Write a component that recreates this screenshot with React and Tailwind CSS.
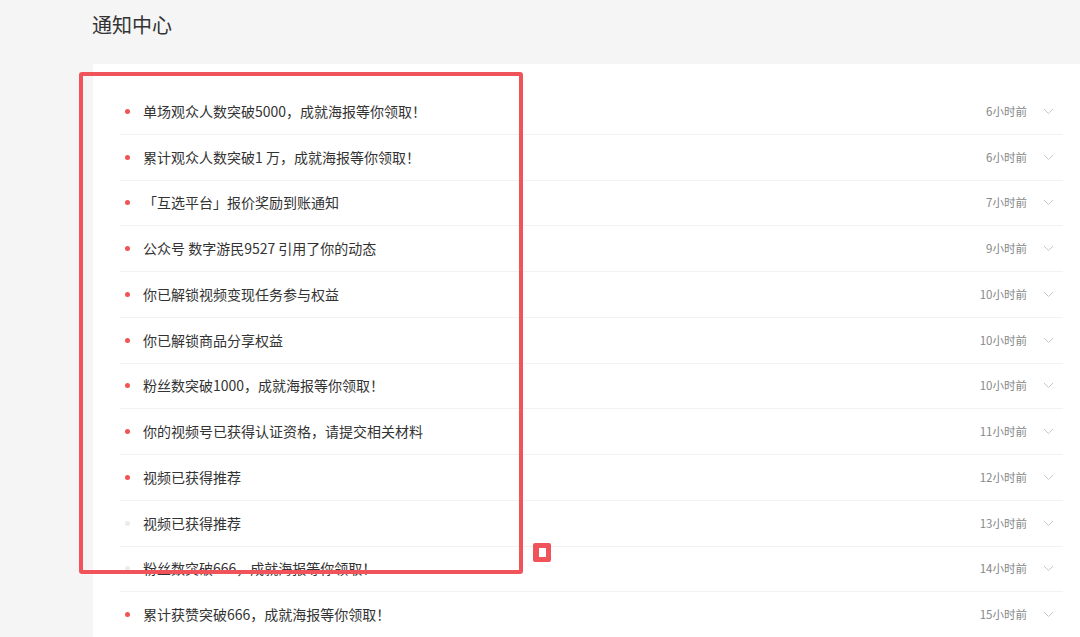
import React from "react";

const items = [
  { t: "单场观众人数突破5000，成就海报等你领取！", time: "6小时前", unread: true },
  { t: "累计观众人数突破1 万，成就海报等你领取！", time: "6小时前", unread: true },
  { t: "「互选平台」报价奖励到账通知", time: "7小时前", unread: true },
  { t: "公众号 数字游民9527 引用了你的动态", time: "9小时前", unread: true },
  { t: "你已解锁视频变现任务参与权益", time: "10小时前", unread: true },
  { t: "你已解锁商品分享权益", time: "10小时前", unread: true },
  { t: "粉丝数突破1000，成就海报等你领取！", time: "10小时前", unread: true },
  { t: "你的视频号已获得认证资格，请提交相关材料", time: "11小时前", unread: true },
  { t: "视频已获得推荐", time: "12小时前", unread: true },
  { t: "视频已获得推荐", time: "13小时前", unread: false },
  { t: "粉丝数突破666，成就海报等你领取！", time: "14小时前", unread: false },
  { t: "累计获赞突破666，成就海报等你领取！", time: "15小时前", unread: true },
];

function Chevron() {
  return (
    <svg width="11" height="7" viewBox="0 0 11 7" className="ml-[16px] mr-[9px]">
      <path d="M1 1 L5.5 5.5 L10 1" fill="none" stroke="#c8c8c8" strokeWidth="1" />
    </svg>
  );
}

export default function App() {
  return (
    <div
      className="relative w-full h-[637px] overflow-hidden bg-[#f5f5f5]"
      style={{ fontFamily: '"Microsoft YaHei", "Noto Sans CJK SC", "Noto Sans", sans-serif' }}
    >
      <div className="h-[64px] pl-[92px] pt-[11px] text-[20px] leading-[28px] text-[#333]">通知中心</div>
      <div className="ml-[93px] bg-white pt-[25px] pl-[27px] pr-[17px] h-[600px]">
        {items.map((it, i) => (
          <div
            key={i}
            className="flex items-center h-[45.75px] border-b border-[#f2f2f2]"
          >
            <span
              className={`ml-[5px] w-[5px] h-[5px] rounded-full ${it.unread ? "bg-[#f05454]" : "bg-[#ececec]"}`}
            />
            <span className="ml-[13px] text-[14px] text-[#333] flex-1">{it.t}</span>
            <span className="text-[11.5px] text-[#888]">{it.time}</span>
            <Chevron />
          </div>
        ))}
      </div>
      {/* annotation overlay */}
      <div className="absolute left-[79px] top-[72px] w-[444px] h-[502px] border-[4px] border-[#f0545a] rounded-[3px]" />
      <div className="absolute left-[533px] top-[543px] w-[18px] h-[19px] bg-[#f0545a] rounded-[2px] flex items-center justify-center">
        <div className="w-[7px] h-[9px] bg-white" />
      </div>
    </div>
  );
}
